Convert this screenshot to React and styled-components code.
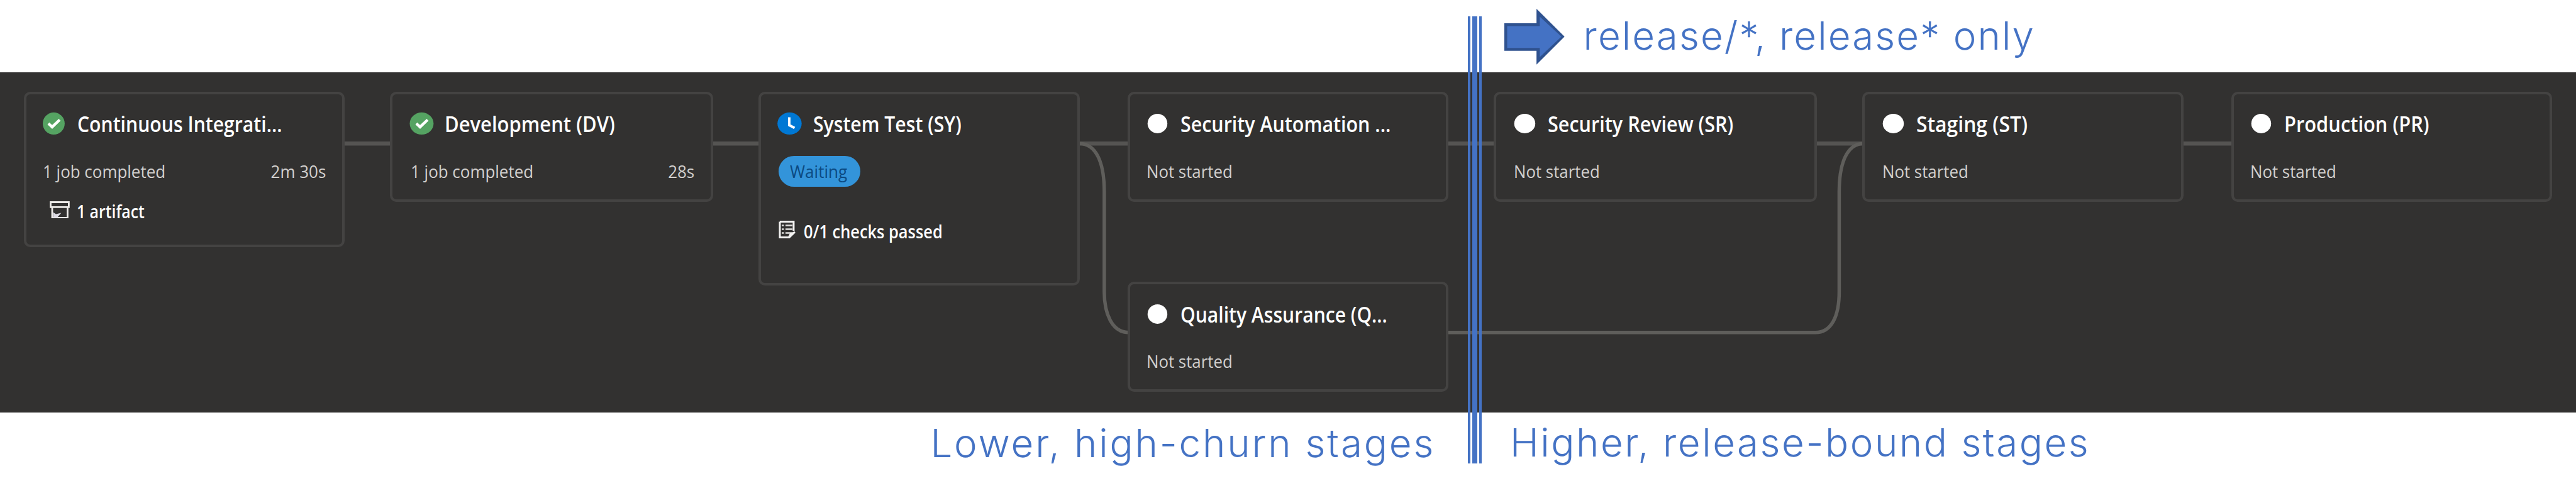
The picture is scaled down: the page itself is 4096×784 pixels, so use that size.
import React from "react";
import styled, { createGlobalStyle } from "styled-components";

const RATIO = 4096 / 4108;
const u = (n) => `${(n * RATIO).toFixed(2)}px`;

const GlobalStyle = createGlobalStyle`
  *, *::before, *::after { box-sizing: border-box; }
  body { margin: 0; background: #fff; overflow: hidden; }
`;

const Page = styled.main`
  position: relative;
  display: flex;
  flex-direction: column;
  width: 4096px;
  height: 784px;
  background: #fff;
  font-family: "Open Sans", "Noto Sans", sans-serif;
`;

const Header = styled.header`
  display: flex;
  align-items: flex-start;
  height: ${u(115)};
  padding: ${u(14)} 0 0 ${u(2399)};
`;

const Arrow = styled.svg`
  display: block;
  flex: none;
  width: ${u(96)};
  height: ${u(90)};
`;

const Caption = styled.span`
  font-family: Inter, sans-serif;
  font-weight: 300;
  font-size: ${u(62)};
  line-height: ${u(76)};
  letter-spacing: ${(p) => u(p.$spacing)};
  color: #4472c4;
  white-space: pre;
`;

const HeaderCaption = styled(Caption)`
  margin: ${u(5)} 0 0 ${u(30)};
`;

const Pipeline = styled.section`
  position: relative;
  height: ${u(543)};
  background: #323130;
`;

const Connectors = styled.svg`
  position: absolute;
  left: 0;
  top: 0;
  width: 100%;
  height: 100%;
`;

const Stages = styled.div`
  position: relative;
  display: grid;
  grid-template-columns: ${[584, 588, 588, 584, 588, 588, 512].map(u).join(" ")};
  align-items: start;
  padding: ${u(31)} 0 0 ${u(38)};
`;

const Column = styled.div`
  display: flex;
  flex-direction: column;
  gap: ${u(127.5)};
`;

const Card = styled.article`
  width: ${(p) => u(p.$width)};
  height: ${(p) => u(p.$height)};
  padding: ${u(22)} ${u(26)} 0 ${(p) => u(p.$inset - 4)};
  border: 4px solid #444342;
  border-radius: ${u(10)};
  background: #323130;
`;

const TitleRow = styled.div`
  display: flex;
  align-items: center;
  gap: ${u(19.5)};
  height: ${u(51)};
`;

const Status = styled.svg`
  display: block;
  flex: none;
  width: ${u(35)};
  height: ${u(35)};
  overflow: visible;
`;

const Text = styled.span`
  display: inline-block;
  white-space: pre;
  transform: scaleX(${(p) => p.$fit});
  transform-origin: ${(p) => (p.$end ? "right" : "left")} center;
`;

const Title = styled(Text).attrs({ as: "h2" })`
  margin: 0;
  padding-top: ${u(3)};
  font-weight: 600;
  font-size: ${u(34)};
  line-height: ${u(48)};
  color: #fff;
`;

const DetailRow = styled.div`
  display: flex;
  align-items: center;
  justify-content: space-between;
  height: ${u(49)};
  margin-top: ${u(25.5)};
`;

const Detail = styled(Text)`
  font-weight: 500;
  font-size: ${u(28)};
  line-height: ${u(46)};
  padding-top: ${u(1)};
  color: #d2d0ce;
`;

const Pill = styled.span`
  display: flex;
  align-items: center;
  width: ${u(131)};
  height: ${u(49)};
  margin-left: ${u(-0.5)};
  padding-left: ${u(18)};
  border-radius: ${u(25)};
  background: #3394da;
`;

const PillText = styled(Detail)`
  font-weight: 400;
  color: #0b4a82;
`;

const NoteRow = styled.div`
  display: flex;
  align-items: center;
  height: ${u(40)};
  margin-top: ${(p) => u(p.$top)};
  margin-left: ${(p) => u(p.$left)};
  gap: ${u(11.5)};
`;

const NoteIcon = styled.svg`
  display: block;
  flex: none;
  width: ${(p) => u(p.$width)};
  height: ${u(28)};
  margin-bottom: ${u(5)};
`;

const Note = styled(Text)`
  padding-top: ${u(2)};
  font-weight: 600;
  font-size: ${u(28)};
  line-height: ${u(38)};
  color: #fff;
`;

const Footer = styled.footer`
  display: grid;
  grid-template-columns: ${u(2289)} auto;
  column-gap: ${u(119)};
  justify-content: start;
  padding-top: ${u(10)};
`;

const LowerCaption = styled(Caption)`
  justify-self: end;
  padding-top: ${u(1)};
`;

const Divider = styled.div`
  position: absolute;
  top: ${u(26)};
  left: ${u(2341)};
  display: flex;
  justify-content: space-between;
  width: 22px;
  height: ${u(713)};
`;

const Bar = styled.i`
  width: ${(p) => p.$width}px;
  background: #4472c4;
`;

function StatusIcon({ kind, rx = 17.5 }) {
  if (kind === "done") {
    return (
      <Status viewBox="0 0 35 35">
        <ellipse cx="17.5" cy="17.5" rx={rx} ry="17.7" fill="#55a362" />
        <path d="M9 17.5 15 23 27 11.5" fill="none" stroke="#fff" strokeWidth="4.4" />
      </Status>
    );
  }
  if (kind === "waiting") {
    return (
      <Status viewBox="0 0 35 35">
        <ellipse cx="17.5" cy="17.5" rx={rx} ry="17.7" fill="#0078d4" />
        <path d="M17 7.5V20L25.5 24.5" fill="none" stroke="#fff" strokeWidth="4" />
      </Status>
    );
  }
  return (
    <Status viewBox="0 0 35 35">
      <ellipse cx="17.5" cy="17.5" rx={rx} ry="15.5" fill="#fff" />
    </Status>
  );
}

function ArtifactIcon() {
  return (
    <NoteIcon $width={32} viewBox="0 0 32 28">
      <path
        d="M1.5 1.5H30.5V9.5H1.5ZM4 9.5V26.5H28.5V9.5"
        fill="none"
        stroke="#eceae8"
        strokeWidth="2.8"
      />
      <path d="M5.500 17.500 10 20.500 18.500 18.500 12 26H5.500Z" fill="#dddbe4" />
    </NoteIcon>
  );
}

function ChecklistIcon() {
  return (
    <NoteIcon $width={28} viewBox="0 0 28 28">
      <path
        d="M2 1.5H24V16M2 1.5V26.5H17L26 18"
        fill="none"
        stroke="#f3f2f1"
        strokeWidth="3"
      />
      <path
        d="M11 7.5H22M11 13.5H22M11 19.5H22M5 7.5H8.5M5 13.5H8.5M5 19.5H8.5"
        stroke="#e1dfdd"
        strokeWidth="2.6"
      />
      <path d="M15 26 18 20 26 17 18 27Z" fill="#f3f2f1" />
    </NoteIcon>
  );
}

function Stage({ width = 512, height = 175.5, inset = 31, status, rx, title, fit, children }) {
  return (
    <Card $width={width} $height={height} $inset={inset}>
      <TitleRow>
        <StatusIcon kind={status} rx={rx} />
        <Title $fit={fit}>{title}</Title>
      </TitleRow>
      {children}
    </Card>
  );
}

function NotStarted() {
  return (
    <DetailRow>
      <Detail $fit={0.925}>Not started</Detail>
    </DetailRow>
  );
}

export default function App() {
  return (
    <Page>
      <GlobalStyle />
      <Header>
        <Arrow viewBox="0 0 96 90">
          <path d="M0 23H51.3V0L96 44.5 51.3 89V67H0Z" fill="#2f528f" />
          <path d="M4.5 27.5H56.5V12.5L91 44.5 56.5 77V62.5H4.5Z" fill="#4472c4" />
        </Arrow>
        <HeaderCaption $spacing={2.1}>release/*, release* only</HeaderCaption>
      </Header>

      <Pipeline>
        <Connectors viewBox="0 0 4108 543" preserveAspectRatio="none">
          <g fill="none" stroke="#555452" strokeWidth="6.5">
            <path d="M548 113.5H624M1136 113.5H1212M1721 113.5H1800M2308 113.5H2384M2896 113.5H2972M3480 113.5H3560" />
            <path
              d="M1721 113.5C1748 113.5 1761 144 1761 190V350C1761 386 1774 415 1800 415"
              stroke="#5f5e5b"
              strokeWidth="5.5"
            />
            <path
              d="M2308 415H2895C2920 415 2933 390 2933 350V190C2933 144 2946 113.5 2972 113.5"
              stroke="#5f5e5b"
              strokeWidth="5.5"
            />
          </g>
        </Connectors>
        <Stages>
          <Stage height={248.5} inset={30.5} status="done" title="Continuous Integrati..." fit={0.89}>
            <DetailRow>
              <Detail $fit={0.93}>1 job completed</Detail>
              <Detail $fit={0.93} $end>2m 30s</Detail>
            </DetailRow>
            <NoteRow $top={19.5} $left={10.5}>
              <ArtifactIcon />
              <Note $fit={0.888}>1 artifact</Note>
            </NoteRow>
          </Stage>
          <Stage width={515.5} inset={32.5} status="done" rx={19} title="Development (DV)" fit={0.914}>
            <DetailRow>
              <Detail $fit={0.93}>1 job completed</Detail>
              <Detail $fit={0.93} $end>28s</Detail>
            </DetailRow>
          </Stage>
          <Stage height={309.5} inset={32} status="waiting" rx={19.3} title="System Test (SY)" fit={0.89}>
            <DetailRow>
              <Pill>
                <PillText $fit={0.935}>Waiting</PillText>
              </Pill>
            </DetailRow>
            <NoteRow $top={51.5} $left={0}>
              <ChecklistIcon />
              <Note $fit={0.91}>0/1 checks passed</Note>
            </NoteRow>
          </Stage>
          <Column>
            <Stage inset={30} rx={15.8} title="Security Automation ..." fit={0.897}>
              <NotStarted />
            </Stage>
            <Stage inset={30} rx={15.8} title="Quality Assurance (Q..." fit={0.888}>
              <NotStarted />
            </Stage>
          </Column>
          <Stage width={515.5} inset={32} rx={16.8} title="Security Review (SR)" fit={0.902}>
            <NotStarted />
          </Stage>
          <Stage inset={31.5} rx={16.8} title="Staging (ST)" fit={0.94}>
            <NotStarted />
          </Stage>
          <Stage inset={30.5} rx={15.8} title="Production (PR)" fit={0.91}>
            <NotStarted />
          </Stage>
        </Stages>
      </Pipeline>

      <Footer>
        <LowerCaption $spacing={2.85}>Lower, high-churn stages</LowerCaption>
        <Caption $spacing={2.55}>Higher, release-bound stages</Caption>
      </Footer>

      <Divider>
        <Bar $width={4} />
        <Bar $width={8} />
        <Bar $width={4} />
      </Divider>
    </Page>
  );
}
